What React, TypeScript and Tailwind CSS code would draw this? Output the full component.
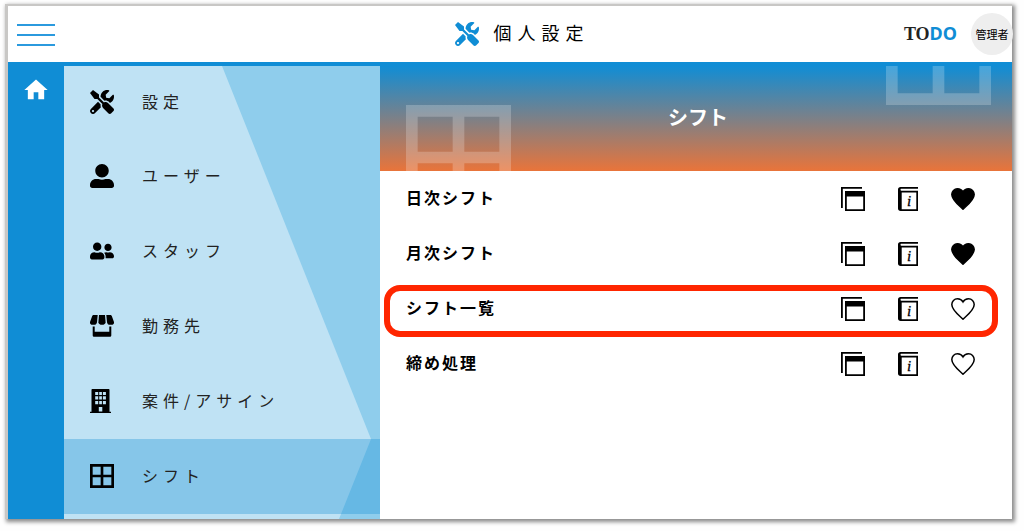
import { useState } from 'react'
import { FaTools, FaUserAlt, FaUserFriends } from 'react-icons/fa'
import { MdHome } from 'react-icons/md'

type IconProps = { className?: string }

function StoreIcon({ className }: IconProps) {
  return (
    <svg viewBox="0 0 24 22" fill="currentColor" className={className} aria-hidden="true">
      <path d="M3.6 0h4.1L7 7.2C6.8 8.8 5.6 9.8 4 9.8H2.3C.6 9.8-.4 8.4.1 6.8L2.2 1.1C2.4.4 3 0 3.6 0z" />
      <path d="M9 0h6l.6 7.2c0 1.5-1.4 2.6-3.6 2.6s-3.6-1.1-3.6-2.6z" />
      <path d="M20.4 0h-4.1L17 7.2c.2 1.6 1.4 2.6 3 2.6h1.7c1.7 0 2.7-1.4 2.2-3l-2.1-5.7C21.6.4 21 0 20.4 0z" />
      <path d="M2.7 11.5h2v5.3h14.6v-5.3h2v8.7c0 .9-.7 1.6-1.6 1.6H4.3c-.9 0-1.6-.7-1.6-1.6z" />
    </svg>
  )
}

function BuildingIcon({ className }: IconProps) {
  return (
    <svg viewBox="0 0 21 24" fill="currentColor" className={className} aria-hidden="true">
      <path
        fillRule="evenodd"
        d="M2.5 0h16c.6 0 1 .4 1 1v21.800H21V24H0v-1.200h1.500V1c0-.6.4-1 1-1zM5.200 3v3h3V3zm4 0v3h2.700V3zm3.700 0v3h3V3zM5.200 7.300v3.200h3V7.300zm4 0v3.200h2.700V7.300zm3.700 0v3.200h3V7.300zM5.200 12v3.200h3V12zm4 0v3.200h2.700V12zm3.700 0v3.200h3V12zM8.800 18v4.600h3.500V18z"
      />
    </svg>
  )
}

function GridIcon({ className }: IconProps) {
  return (
    <svg viewBox="0 0 18 18" fill="currentColor" className={className} aria-hidden="true">
      <path fillRule="evenodd" d="M0 0h18v18H0zM2 2v6h6V2zm8 0v6h6V2zM2 10v6h6v-6zm8 0v6h6v-6z" />
    </svg>
  )
}

function WindowsIcon({ className }: IconProps) {
  return (
    <svg viewBox="0 0 24 24" fill="currentColor" className={className} aria-hidden="true">
      <path d="M0 0h21v1.800H1.800V21H0z" />
      <path fillRule="evenodd" d="M4 4h20v20H4zM5.800 9.600v12.600h16.400V9.600z" />
    </svg>
  )
}

function BookIcon({ className }: IconProps) {
  return (
    <svg viewBox="0 0 20 24" fill="currentColor" className={className} aria-hidden="true">
      <path
        fillRule="evenodd"
        d="M2.600 0H20v1.700H3.400c-.7 0-.9.5-.9 1.100s.3 1 .9 1H20V24H2.600C1 24 0 23 0 21.500v-19C0 1 1 0 2.600 0zM3.700 5.500v16.800h14.600V5.500z"
      />
      <text x="11" y="18.500" textAnchor="middle" fontSize="15" fontStyle="italic" fontFamily="Liberation Serif, serif" stroke="currentColor" strokeWidth="0.3">
        i
      </text>
    </svg>
  )
}

function HeartIcon({ filled, className }: IconProps & { filled: boolean }) {
  return (
    <svg viewBox="0 0 24 22" className={className} aria-hidden="true">
      <path
        d="M12 21.200C8 17.300.8 12.300.8 6.600.8 3.300 3.300.8 6.500.8 8.800.8 10.900 2 12 4 13.100 2 15.200.8 17.500.8c3.200 0 5.700 2.500 5.700 5.800C23.200 12.300 16 17.300 12 21.200z"
        fill={filled ? 'currentColor' : 'none'}
        stroke="currentColor"
        strokeWidth="1.500"
      />
    </svg>
  )
}

const menuItems = [
  { label: '設定', icon: <FaTools className="size-6" /> },
  { label: 'ユーザー', icon: <FaUserAlt className="size-6" /> },
  { label: 'スタッフ', icon: <FaUserFriends className="size-6" /> },
  { label: '勤務先', icon: <StoreIcon className="h-[22px] w-6" /> },
  { label: '案件/アサイン', icon: <BuildingIcon className="h-6 w-[21px]" /> },
  { label: 'シフト', icon: <GridIcon className="size-6" /> },
]

const shiftPages = [
  { label: '日次シフト', favorite: true },
  { label: '月次シフト', favorite: true },
  { label: 'シフト一覧', favorite: false, marked: true },
  { label: '締め処理', favorite: false },
]

export default function App() {
  const [active, setActive] = useState('シフト')
  const [favorites, setFavorites] = useState(shiftPages.filter(p => p.favorite).map(p => p.label))

  const toggleFavorite = (label: string) => {
    setFavorites(prev => (prev.includes(label) ? prev.filter(l => l !== label) : [...prev, label]))
  }

  return (
    <div className="flex min-h-screen flex-col bg-[#fefefe] pt-1 pr-3 pb-3 pl-[5px] font-['Noto_Sans_CJK_JP',sans-serif] text-black">
      <div className="flex grow flex-col border-t-2 border-l-[3px] border-[#c8c7c5] bg-white shadow-[2px_2px_4px_1px_rgba(0,0,0,0.45)]">
        {/* Header */}
        <header className="flex h-[60px] items-center border-b-4 border-[#108dd5]">
          <div className="flex-1 pt-0.5">
            <button aria-label="menu" className="ml-[9px] flex w-[38px] flex-col gap-2 py-2">
              <span className="h-0.5 w-full bg-[#2b9ade]"></span>
              <span className="h-0.5 w-full bg-[#2b9ade]"></span>
              <span className="h-0.5 w-full bg-[#2b9ade]"></span>
            </button>
          </div>
          <h1 className="flex items-center gap-[15px] pl-6 text-lg tracking-[6px]">
            <FaTools className="size-6 text-[#108dd5]" />
            <span className="pb-1">個人設定</span>
          </h1>
          <div className="flex flex-1 items-center justify-end gap-[14px]">
            <a href="#todo" className="pb-0.5 text-lg font-bold text-[#222]">
              <span className="font-['Liberation_Serif',serif]">TO</span>
              <span className="font-['Noto_Sans',sans-serif] text-[#108dd5]">DO</span>
            </a>
            <button className="-mr-px size-[42px] rounded-full bg-[#eeeeee] text-[11px]">管理者</button>
          </div>
        </header>

        <div className="flex grow">
          {/* Rail */}
          <div className="flex w-14 shrink-0 justify-center bg-[#108dd5] pt-[10px]">
            <a href="#home" aria-label="home" className="h-7 text-white">
              <MdHome className="size-7" />
            </a>
          </div>

          {/* Side menu */}
          <nav className="relative w-[316px] shrink-0 bg-[#8fcdec]">
            <svg
              viewBox="0 0 316 453"
              preserveAspectRatio="none"
              className="absolute inset-0 size-full"
              aria-hidden="true"
            >
              <polygon points="0,0 158,0 307,373 275,453 0,453" fill="#bfe2f4" />
            </svg>
            <ul className="relative">
              {menuItems.map(item => (
                <li key={item.label} className="h-[75px] first:h-[73px]">
                  <button
                    onClick={() => setActive(item.label)}
                    className={`flex size-full items-center pb-0.5 pl-[26px] text-left tracking-[5px] text-[#222] ${
                      active === item.label ? 'bg-[#108dd5]/32' : ''
                    }`}
                  >
                    <span className="w-[52px] text-black">{item.icon}</span>
                    <span className="pb-0.5">{item.label}</span>
                  </button>
                </li>
              ))}
            </ul>
          </nav>

          {/* Pages of the selected menu */}
          <main className="min-w-0 grow">
            <div className="relative flex h-[105px] items-center justify-center overflow-hidden bg-linear-to-b/srgb from-[#108dd5] to-[#e9743a]">
              <GridIcon className="absolute top-[39px] left-[26px] size-[105px] text-white/22" />
              <GridIcon className="absolute right-[21px] bottom-[66px] size-[105px] text-white/22" />
              <h2 className="pb-1 pl-1 text-xl font-bold text-white">シフト</h2>
            </div>
            <ul>
              {shiftPages.map(page => (
                <li key={page.label} className="relative flex h-[55px] items-center gap-[33px] pr-[37px] pl-[26px]">
                  {page.marked && (
                    <span className="pointer-events-none absolute -bottom-px top-1 right-[14px] left-1 rounded-2xl border-6 border-[#ff2600]"></span>
                  )}
                  <a href="#page" className="grow pb-1 font-bold tracking-[2px]">
                    {page.label}
                  </a>
                  <button aria-label="open in new window">
                    <WindowsIcon className="size-6" />
                  </button>
                  <button aria-label="manual">
                    <BookIcon className="h-6 w-5" />
                  </button>
                  <button aria-label="favorite" onClick={() => toggleFavorite(page.label)}>
                    <HeartIcon filled={favorites.includes(page.label)} className="h-[22px] w-6" />
                  </button>
                </li>
              ))}
            </ul>
          </main>
        </div>
      </div>
    </div>
  )
}
